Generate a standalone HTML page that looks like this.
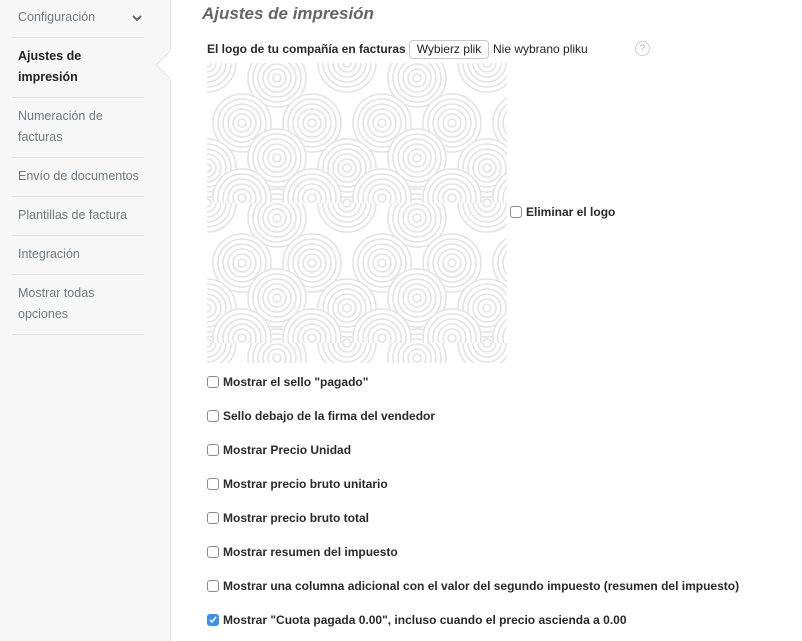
<!DOCTYPE html>
<html><head><meta charset="utf-8"><style>
*{margin:0;padding:0;box-sizing:border-box}
body{width:802px;height:641px;overflow:hidden;background:#fff;font-family:"Liberation Sans",Arial,sans-serif;position:relative;color:#333}
.side{position:absolute;left:0;top:0;width:171px;height:641px;background:#f7f7f7;border-right:1px solid #dde5ea}
.item{position:absolute;left:12px;width:132px;padding-left:6px;font-size:12.5px;line-height:21px;color:#6f7a82;border-bottom:1px solid #dfe3e6}
.item.act{color:#222;font-weight:bold}
.arrow{position:absolute;left:160px;top:54px;width:22px;height:22px;background:#fff;border-left:1px solid #dde5ea;border-bottom:1px solid #dde5ea;transform:rotate(45deg)}
h2{position:absolute;left:202px;top:4px;font-size:17px;font-style:italic;font-weight:bold;color:#666}
.lbl{position:absolute;font-size:12px;font-weight:bold;color:#2a2a2a;white-space:nowrap}
.cb{position:absolute;width:12px;height:12px;border:1px solid #8c8c8c;border-radius:3px;background:#fff}
.row{position:absolute;left:207px;height:14px}
.row .cb{left:0;top:1px}
.row .lbl{left:16px;top:0}
</style></head><body>
<div class="side">
<div class="item" style="top:7px;height:31px">Configuración<svg style="position:absolute;right:2px;top:7px" width="10" height="8" viewBox="0 0 10 8"><path d="M1 2l4 4 4-4" fill="none" stroke="#666" stroke-width="2"/></svg></div>
<div class="item act" style="top:46px;height:52px">Ajustes de<br>impresión</div>
<div class="item" style="top:106px;height:52px">Numeración de<br>facturas</div>
<div class="item" style="top:166px;height:31px">Envío de documentos</div>
<div class="item" style="top:205px;height:31px">Plantillas de factura</div>
<div class="item" style="top:244px;height:31px">Integración</div>
<div class="item" style="top:283px;height:52px">Mostrar todas<br>opciones</div>
</div>
<div class="arrow"></div>
<div style="position:absolute;left:171px;top:40px;width:20px;height:60px;background:#fff"></div>
<h2>Ajustes de impresión</h2>
<div class="lbl" style="left:207px;top:42px">El logo de tu compañía en facturas</div>
<div style="position:absolute;left:409px;top:40px;width:80px;height:19px;border:1px solid #c8c8c8;border-radius:4px;font-size:12px;line-height:17px;text-align:center;color:#222">Wybierz plik</div>
<div style="position:absolute;left:493px;top:42px;font-size:12px;color:#222">Nie wybrano pliku</div>
<div style="position:absolute;left:635px;top:41px;width:15px;height:15px;border:1px solid #ccc;border-radius:50%;font-size:9px;line-height:13px;text-align:center;color:#aaa">?</div>
<svg style="position:absolute;left:207px;top:63px" width="300" height="300">
<defs>
<g id="c"><circle r="30" fill="#fff"/><g fill="none" stroke="#e3e3e3" stroke-width="1.6"><circle r="4"/><circle r="9"/><circle r="14"/><circle r="19"/><circle r="24"/><circle r="29"/></g></g>
<pattern id="p" width="140" height="140" patternUnits="userSpaceOnUse">
<rect width="140" height="140" fill="#fff"/>
<use href="#c" x="0" y="0"/><use href="#c" x="140" y="0"/><use href="#c" x="0" y="140"/><use href="#c" x="140" y="140"/>
<use href="#c" x="70" y="15"/><use href="#c" x="70" y="155"/>
<use href="#c" x="35" y="60"/><use href="#c" x="105" y="60"/>
<use href="#c" x="0" y="105"/><use href="#c" x="140" y="105"/>
<use href="#c" x="70" y="95"/>
<use href="#c" x="35" y="135"/><use href="#c" x="105" y="135"/>
</pattern></defs>
<rect width="300" height="300" fill="url(#p)"/>
</svg>
<div class="row" style="left:510px;top:205px"><div class="cb"></div><div class="lbl">Eliminar el logo</div></div>
<div class="row" style="top:375px"><div class="cb"></div><div class="lbl">Mostrar el sello "pagado"</div></div>
<div class="row" style="top:409px"><div class="cb"></div><div class="lbl">Sello debajo de la firma del vendedor</div></div>
<div class="row" style="top:443px"><div class="cb"></div><div class="lbl">Mostrar Precio Unidad</div></div>
<div class="row" style="top:477px"><div class="cb"></div><div class="lbl">Mostrar precio bruto unitario</div></div>
<div class="row" style="top:511px"><div class="cb"></div><div class="lbl">Mostrar precio bruto total</div></div>
<div class="row" style="top:545px"><div class="cb"></div><div class="lbl">Mostrar resumen del impuesto</div></div>
<div class="row" style="top:579px"><div class="cb"></div><div class="lbl">Mostrar una columna adicional con el valor del segundo impuesto (resumen del impuesto)</div></div>
<div class="row" style="top:613px"><div class="cb" style="background:#3a8ef5;border-color:#3a8ef5"><svg width="10" height="10" viewBox="0 0 10 10" style="position:absolute;left:0;top:0"><path d="M2 5l2 2 4-5" fill="none" stroke="#fff" stroke-width="1.6"/></svg></div><div class="lbl">Mostrar "Cuota pagada 0.00", incluso cuando el precio ascienda a 0.00</div></div>
</body></html>
